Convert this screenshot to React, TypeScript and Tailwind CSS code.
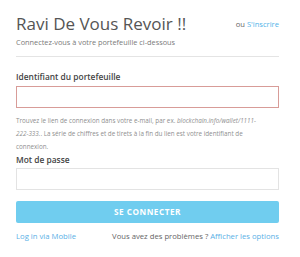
import React from 'react';

export default function App() {
  return (
    <div className="w-[300px] h-[257px] bg-white overflow-hidden" style={{ fontFamily: '"Open Sans", "Liberation Sans", sans-serif' }}>
      <div className="pl-[16px] pr-[21px] pt-[14px]">
        {/* Header */}
        <div className="flex items-start justify-between">
          <h1 className="text-[17px] leading-[20px] text-[#555] font-normal">Ravi De Vous Revoir !!</h1>
          <div className="text-[7.6px] leading-[12px] mt-[4px] text-[#666]">
            ou <a className="text-[#4fb3e8]">S'inscrire</a>
          </div>
        </div>
        <p className="text-[7.35px] leading-[10px] text-[#7a7a7a] mt-[3px]">Connectez-vous à votre portefeuille ci-dessous</p>
        <div className="h-px bg-[#e4e4e4] mt-[9px]" />

        {/* Wallet id */}
        <label className="block text-[8.4px] font-semibold text-[#444] mt-[14px] leading-[12px]">Identifiant du portefeuille</label>
        <div className="h-[22px] border border-[#d89c98] mt-[3px]" />
        <p className="text-[6.3px] leading-[13px] text-[#8f8f8f] mt-[6px] whitespace-nowrap">
          Trouvez le lien de connexion dans votre e-mail, par ex. <i>blockchain.info/wallet/1111-</i>
          <br />
          <i>222-333.</i>. La série de chiffres et de tirets à la fin du lien est votre identifiant de
          <br />
          connexion.
        </p>

        {/* Password */}
        <label className="block text-[8.4px] font-semibold text-[#444] mt-[1px] leading-[12px]">Mot de passe</label>
        <div className="h-[22px] border border-[#e3e3e3] mt-[2px]" />

        <button className="w-full h-[22px] mt-[11px] bg-[#70cdef] rounded-[2px] text-white text-[8.2px] font-bold tracking-[0.5px] block">SE CONNECTER</button>

        {/* Footer */}
        <div className="flex justify-between mt-[7px] text-[7.7px] leading-[12px]">
          <a className="text-[#5ab0e6]">Log in via Mobile</a>
          <span className="text-[#666]">Vous avez des problèmes ? <a className="text-[#5ab0e6]">Afficher les options</a></span>
        </div>
      </div>
    </div>
  );
}
